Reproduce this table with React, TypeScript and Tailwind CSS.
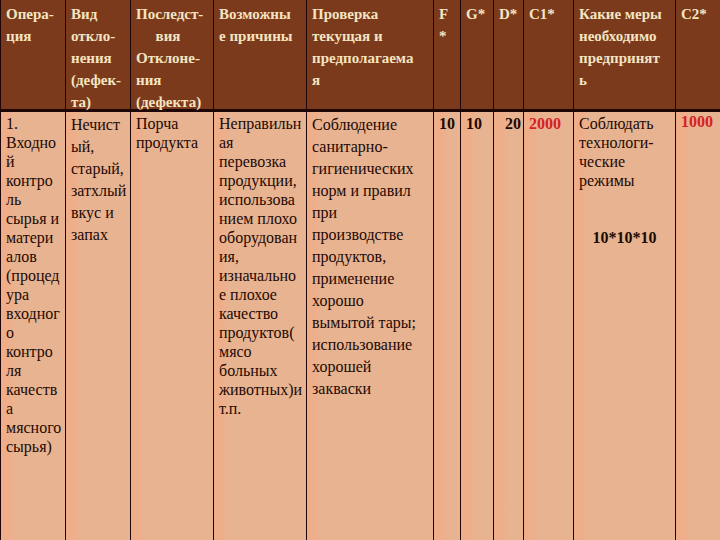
const head = "bg-[#7a3a1b] border-r border-[#1f0606] pt-[3px] px-[5px] font-bold text-[15px] leading-[22px] text-[#f4e4c2]";
const body =
  "border-r border-[#1f0606] pt-[2px] px-[5px] text-[16px] text-[#1e0a04] bg-[linear-gradient(to_right,#efae8a_0px,#efae8a_8px,#e8b390_14px)]";

function Lines({ items }: { items: string[] }) {
  return (
    <>
      {items.map((t, i) => (
        <div key={i} className="whitespace-nowrap">
          {t}
        </div>
      ))}
    </>
  );
}

export default function App() {
  return (
    <div className="w-[720px] h-[540px] overflow-hidden bg-[#e8b390] grid grid-cols-[65px_65px_83px_93px_127px_27px_33px_30px_50px_102px_45px] grid-rows-[112px_1fr] border-l border-[#1f0606] font-['Liberation_Serif',serif]">
      {/* header */}
      <div className={`${head} border-b-[3px]`}>
        <Lines items={["Опера-", "ция"]} />
      </div>
      <div className={`${head} border-b-[3px]`}>
        <Lines items={["Вид", "откло-", "нения", "(дефек-", "та)"]} />
      </div>
      <div className={`${head} border-b-[3px]`}>
        <div>Последст-</div>
        <div className="text-center pr-[8px]">вия</div>
        <Lines items={["Отклоне-", "ния", "(дефекта)"]} />
      </div>
      <div className={`${head} border-b-[3px]`}>
        <Lines items={["Возможны", "е причины"]} />
      </div>
      <div className={`${head} border-b-[3px]`}>
        <Lines items={["Проверка", "текущая и", "предполагаема", "я"]} />
      </div>
      <div className={`${head} border-b-[3px]`}>
        <Lines items={["F", "*"]} />
      </div>
      <div className={`${head} border-b-[3px]`}>G*</div>
      <div className={`${head} border-b-[3px]`}>D*</div>
      <div className={`${head} border-b-[3px]`}>C1*</div>
      <div className={`${head} border-b-[3px]`}>
        <Lines items={["Какие меры", "необходимо", "предпринят", "ь"]} />
      </div>
      <div className={`${head} border-b-[3px] border-r-0`}>C2*</div>

      {/* body */}
      <div className={`${body} leading-[19px]`}>
        <Lines
          items={[
            "1.",
            "Входно",
            "й",
            "контро",
            "ль",
            "сырья и",
            "матери",
            "алов",
            "(процед",
            "ура",
            "входног",
            "о",
            "контро",
            "ля",
            "качеств",
            "а",
            "мясного",
            "сырья)",
          ]}
        />
      </div>
      <div className={`${body} leading-[22px]`}>
        <Lines items={["Нечист", "ый,", "старый,", "затхлый", "вкус и", "запах"]} />
      </div>
      <div className={`${body} leading-[19px]`}>
        <Lines items={["Порча", "продукта"]} />
      </div>
      <div className={`${body} leading-[19px]`}>
        <Lines
          items={[
            "Неправильн",
            "ая",
            "перевозка",
            "продукции,",
            "использова",
            "нием плохо",
            "оборудован",
            "ия,",
            "изначально",
            "е плохое",
            "качество",
            "продуктов(",
            "мясо",
            "больных",
            "животных)и",
            "т.п.",
          ]}
        />
      </div>
      <div className={`${body} leading-[22px]`}>
        <Lines
          items={[
            "Соблюдение",
            "санитарно-",
            "гигиенических",
            "норм и правил",
            "при",
            "производстве",
            "продуктов,",
            "применение",
            "хорошо",
            "вымытой тары;",
            "использование",
            "хорошей",
            "закваски",
          ]}
        />
      </div>
      <div className={`${body} leading-[19px] font-bold`}>10</div>
      <div className={`${body} leading-[19px] font-bold`}>10</div>
      <div className={`${body} leading-[19px] font-bold text-right pr-[2px]`}>20</div>
      <div className={`${body} leading-[19px] font-bold text-[#d42222]`}>2000</div>
      <div className={`${body} leading-[19px]`}>
        <Lines items={["Соблюдать", "технологи-", "ческие", "режимы"]} />
        <div className="mt-[38px] text-center font-bold">10*10*10</div>
      </div>
      <div className={`${body} border-r-0 leading-[15px] pt-0 font-bold text-[#d42222]`}>1000</div>
    </div>
  );
}
